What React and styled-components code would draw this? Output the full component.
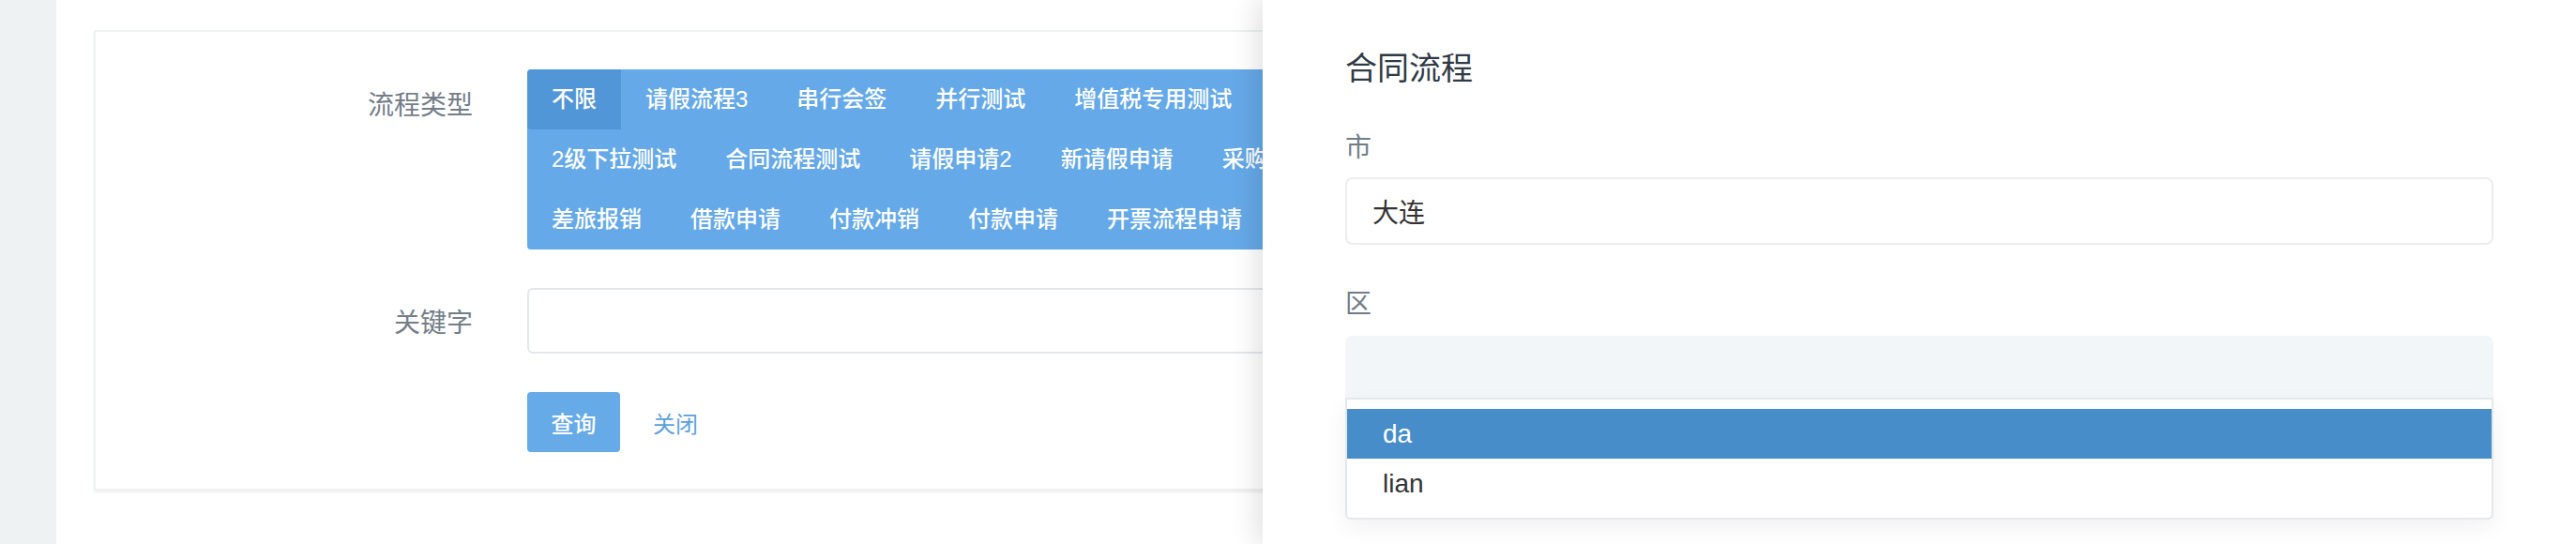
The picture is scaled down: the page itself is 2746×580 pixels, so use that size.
import React from "react";
import styled, { createGlobalStyle } from "styled-components";

const GlobalStyle = createGlobalStyle`
  html, body { margin: 0; padding: 0; background: #ffffff; }
  body {
    font-family: "Liberation Sans", "Noto Sans CJK SC", sans-serif;
    -webkit-font-smoothing: antialiased;
  }
  * { box-sizing: border-box; }
`;

const Page = styled.div`
  position: relative;
  display: flex;
  width: 2746px;
  height: 580px;
  overflow: hidden;
  background: #ffffff;
`;

const Sidebar = styled.div`
  width: 60px;
  flex: none;
  background: #eef2f3;
`;

const Main = styled.div`
  flex: 1;
  padding: 32px 0 0 40px;
`;

const Card = styled.div`
  width: 1700px;
  background: #ffffff;
  border: 2px solid #eef1f2;
  border-radius: 2px;
  box-shadow: 0 2px 3px rgba(0, 0, 0, 0.07);
  padding: 40px 0 39px;
`;

const FormRow = styled.div`
  display: flex;
  align-items: ${(p) => (p.$top ? "flex-start" : "center")};
  margin-bottom: ${(p) => (p.$last ? "0" : "41px")};
`;

const Label = styled.div`
  width: 460px;
  flex: none;
  padding-right: 58px;
  text-align: right;
  font-size: 28px;
  line-height: 64px;
  padding-top: ${(p) => (p.$top ? "4px" : "0")};
  color: #737e89;
  font-family: "Noto Sans CJK SC", sans-serif;
`;

const TypeBox = styled.div`
  width: 1100px;
  background: #65a9e8;
  border-radius: 4px;
  display: flex;
  flex-direction: column;
  overflow: hidden;
`;

const TypeRow = styled.div`
  display: flex;
  height: 64px;
  white-space: nowrap;
`;

const TypeItem = styled.div`
  flex: none;
  padding: 0 26px;
  height: 64px;
  line-height: 64px;
  font-size: 24px;
  font-weight: 500;
  color: #ffffff;
  background: ${(p) => (p.$active ? "#5196d6" : "transparent")};
  border-radius: ${(p) => (p.$active ? "4px 0 0 4px" : "0")};
`;

const KeywordInput = styled.div`
  width: 1100px;
  height: 70px;
  border: 2px solid #e4e8eb;
  border-radius: 6px;
  background: #ffffff;
`;

const Spacer = styled.div`
  width: 460px;
  flex: none;
`;

const PrimaryButton = styled.button`
  width: 99px;
  height: 64px;
  border: none;
  border-radius: 4px;
  background: #66aae8;
  color: #ffffff;
  font-size: 24px;
  font-weight: 500;
  font-family: "Noto Sans CJK SC", sans-serif;
  padding: 0;
  cursor: pointer;
`;

const LinkButton = styled.span`
  margin-left: 35px;
  font-size: 24px;
  color: #5d9fdf;
  font-family: "Noto Sans CJK SC", sans-serif;
`;

const Drawer = styled.div`
  position: absolute;
  top: 0;
  right: 0;
  width: 1400px;
  height: 580px;
  background: #ffffff;
  box-shadow: -4px 0 30px rgba(0, 0, 0, 0.14);
  padding: 48px 88px 0;
`;

const DrawerTitle = styled.div`
  font-size: 34px;
  line-height: 46px;
  color: #2f3a44;
  font-family: "Noto Sans CJK SC", sans-serif;
`;

const FieldLabel = styled.div`
  margin-top: 41px;
  font-size: 28px;
  line-height: 40px;
  color: #717c87;
  font-family: "Noto Sans CJK SC", sans-serif;
`;

const TextField = styled.div`
  margin-top: 14px;
  height: 72px;
  border: 2px solid #ebedef;
  border-radius: 8px;
  padding-left: 27px;
  display: flex;
  align-items: center;
  font-size: 28px;
  color: #333333;
`;

const SelectWrap = styled.div`
  position: relative;
  margin-top: 16px;
`;

const SelectBox = styled.div`
  height: 68px;
  background: #f2f6f9;
  border-radius: 8px 8px 0 0;
  border-bottom: 2px solid #e6eaed;
`;

const Dropdown = styled.div`
  background: #ffffff;
  border: 2px solid #e3e7ea;
  border-top: none;
  border-radius: 0 0 6px 6px;
  padding: 10px 0 10px;
  box-shadow: 0 8px 24px rgba(0, 0, 0, 0.06);
`;

const Option = styled.div`
  height: 53px;
  line-height: 53px;
  padding-left: 38px;
  font-size: 28px;
  color: ${(p) => (p.$active ? "#ffffff" : "#333333")};
  background: ${(p) => (p.$active ? "#478dc9" : "transparent")};
`;

const rows = [
  ["不限", "请假流程3", "串行会签", "并行测试", "增值税专用测试", "采购申请"],
  ["2级下拉测试", "合同流程测试", "请假申请2", "新请假申请", "采购申请单"],
  ["差旅报销", "借款申请", "付款冲销", "付款申请", "开票流程申请", "报销申请"],
];

export default function App() {
  return (
    <>
      <GlobalStyle />
      <Page>
        <Sidebar />
        <Main>
          <Card>
            <FormRow $top>
              <Label $top>流程类型</Label>
              <TypeBox>
                {rows.map((row, ri) => (
                  <TypeRow key={ri}>
                    {row.map((t, i) => (
                      <TypeItem key={t} $active={ri === 0 && i === 0}>
                        {t}
                      </TypeItem>
                    ))}
                  </TypeRow>
                ))}
              </TypeBox>
            </FormRow>
            <FormRow>
              <Label>关键字</Label>
              <KeywordInput />
            </FormRow>
            <FormRow $last>
              <Spacer />
              <PrimaryButton>查询</PrimaryButton>
              <LinkButton>关闭</LinkButton>
            </FormRow>
          </Card>
        </Main>
        <Drawer>
          <DrawerTitle>合同流程</DrawerTitle>
          <FieldLabel>市</FieldLabel>
          <TextField>大连</TextField>
          <FieldLabel>区</FieldLabel>
          <SelectWrap>
            <SelectBox />
            <Dropdown>
              <Option $active>da</Option>
              <Option>lian</Option>
            </Dropdown>
          </SelectWrap>
        </Drawer>
      </Page>
    </>
  );
}
